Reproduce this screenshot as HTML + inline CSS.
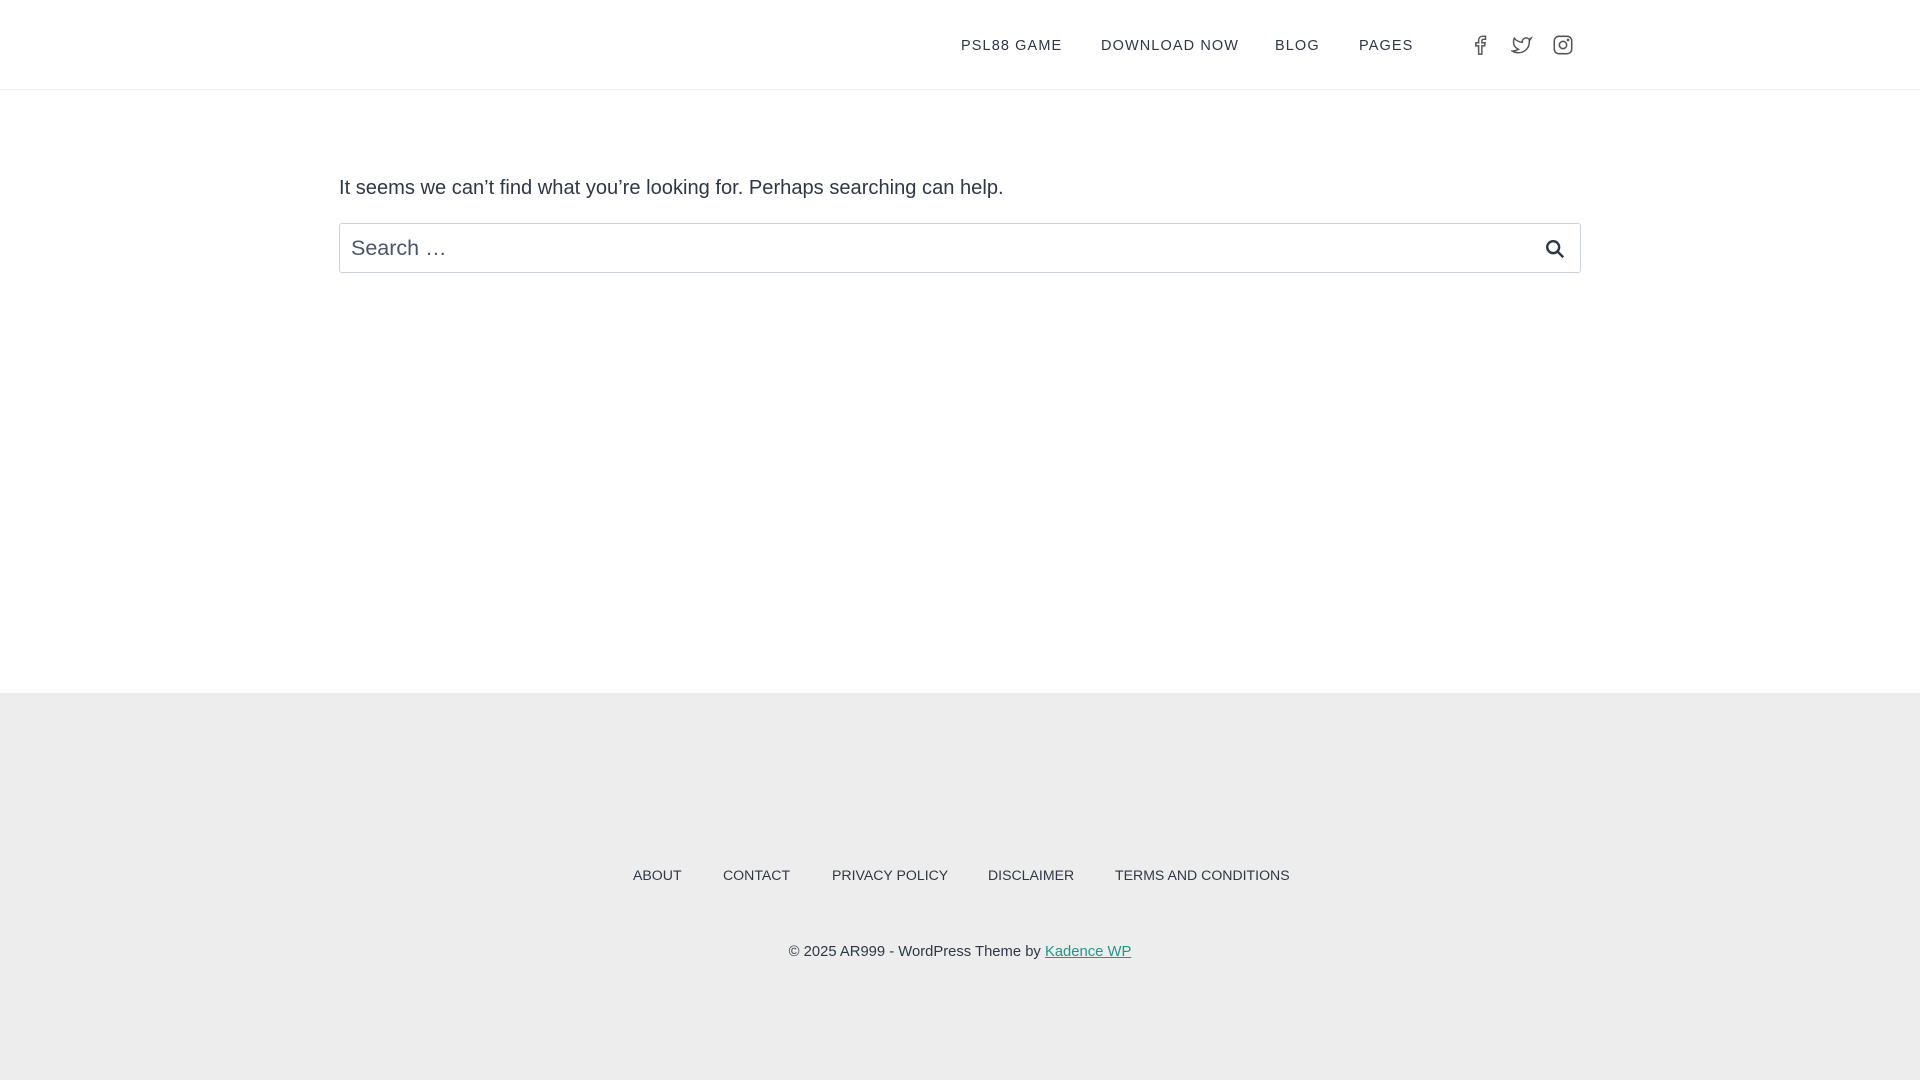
<!DOCTYPE html>
<html><head><meta charset="utf-8"><style>
*{margin:0;padding:0;box-sizing:border-box}
body{width:1920px;height:1080px;overflow:hidden;font-family:"Liberation Sans",sans-serif;background:#fff;color:#2d3748;position:relative}
header{position:absolute;left:0;top:0;width:1920px;height:90px;border-bottom:1px solid #eee}
.nav a{position:absolute;top:36px;font-size:14.5px;letter-spacing:1.1px;color:#2d3748;text-decoration:none;line-height:20px}
.ic{position:absolute;top:34px;width:22px;height:22px}
p.msg{position:absolute;left:339px;top:177px;font-size:20.1px;color:#2d3748}
.search{position:absolute;left:339px;top:223px;width:1242px;height:50px;border:1px solid #cbd2d9;border-radius:3px}
.search span{position:absolute;left:11px;top:12px;font-size:21.5px;color:#4a5568}
footer{position:absolute;left:0;top:693px;width:1920px;height:387px;background:#ededed}
.fm a{position:absolute;top:174px;font-size:14.1px;color:#2d3748;text-decoration:none}
.copy{position:absolute;top:251px;width:1920px;text-align:center;font-size:14.8px;color:#2d3748}
.copy a{color:#1a9b85;text-decoration:underline}
</style></head><body>
<header>
<div class="nav">
<a style="left:961px">PSL88 GAME</a>
<a style="left:1101px">DOWNLOAD NOW</a>
<a style="left:1275px">BLOG</a>
<a style="left:1359px">PAGES</a>
</div>
<svg class="ic" style="left:1469px" viewBox="0 0 24 24" fill="none" stroke="#555" stroke-width="1.6"><path d="M14 22v-9h3l.5-3.5H14V7.5c0-1 .4-1.7 1.8-1.7H18V2.6C17.5 2.5 16.4 2.4 15.2 2.4 12.5 2.4 10.5 4 10.5 7v2.5H7.5V13h3v9z"/></svg>
<svg class="ic" style="left:1511px" viewBox="0 0 24 24" fill="none" stroke="#555" stroke-width="1.6"><path d="M22 4.5c-.8.5-1.7.8-2.6 1A4.2 4.2 0 0 0 12.3 9 11.8 11.8 0 0 1 3.6 4.6s-3.7 8.4 4.6 12.1A12.5 12.5 0 0 1 1.5 18.6C9.8 23.3 20 18.6 20 8.1c0-.3 0-.5-.1-.8A8 8 0 0 0 22 4.5z"/></svg>
<svg class="ic" style="left:1552px" viewBox="0 0 24 24" fill="none" stroke="#555" stroke-width="1.7"><rect x="2.5" y="2.5" width="19" height="19" rx="5"/><circle cx="12" cy="12" r="4"/><circle cx="17.5" cy="6.5" r=".6" fill="#555"/></svg>
</header>
<p class="msg">It seems we can’t find what you’re looking for. Perhaps searching can help.</p>
<div class="search"><span>Search …</span>
<svg style="position:absolute;right:14px;top:14px" width="22" height="22" viewBox="0 0 24 24" fill="none" stroke="#2d3748" stroke-width="2.6"><circle cx="10" cy="10" r="6.5"/><path d="M15 15l6 6"/></svg>
</div>
<footer>
<div class="fm">
<a style="left:633px">ABOUT</a>
<a style="left:723px">CONTACT</a>
<a style="left:832px">PRIVACY POLICY</a>
<a style="left:988px">DISCLAIMER</a>
<a style="left:1115px">TERMS AND CONDITIONS</a>
</div>
<div class="copy">© 2025 AR999 - WordPress Theme by <a>Kadence WP</a></div>
</footer>
</body></html>
